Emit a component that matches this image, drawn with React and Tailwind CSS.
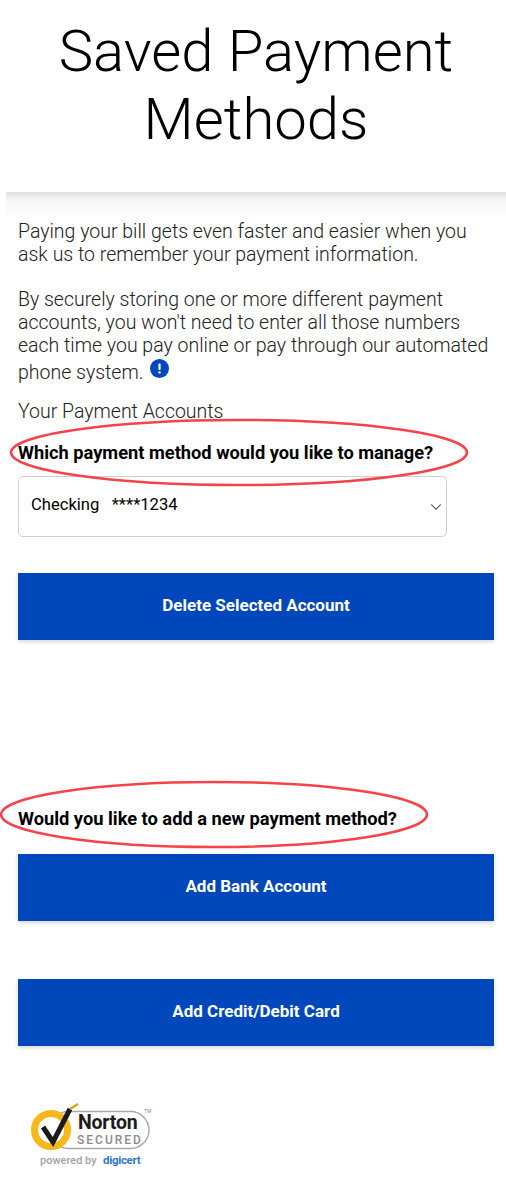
import React from 'react';
import { ChevronDown } from 'lucide-react';

const ActionButton = ({ children, className = '' }) => (
    <button className={`flex h-[67px] w-[476px] items-center justify-center bg-[#0047bb] pb-[2px] text-[17px] font-bold text-white shadow-[0_2px_4px_rgba(0,0,0,0.16)] ${className}`}>
        {children}
    </button>
);

const Circled = ({ width, height, className }) => (
    <svg width={width} height={height} viewBox={`0 0 ${width} ${height}`} className={`pointer-events-none absolute ${className}`} fill="none">
        <ellipse cx={width / 2} cy={height / 2} rx={width / 2 - 2} ry={height / 2 - 2} stroke="#f5434b" strokeWidth="2.5" />
    </svg>
);

const InfoDot = () => (
    <svg width="19" height="19" viewBox="0 0 19 19" className="relative -top-[5px] ml-[7px] inline-block align-middle">
        <circle cx="9.5" cy="9.5" r="9.5" fill="#0047bb" />
        <rect x="8.4" y="4.5" width="2.2" height="6.5" rx="0.8" fill="#fff" />
        <circle cx="9.5" cy="13.4" r="1.2" fill="#fff" />
    </svg>
);

const NortonSeal = () => (
    <svg width="140" height="80" viewBox="0 0 140 80" className="block">
        <rect x="30" y="16.5" width="99" height="37" rx="18.5" fill="#fff" stroke="#a8a8a8" strokeWidth="1.4" />
        <circle cx="31" cy="35" r="16.5" fill="#fff" stroke="#f5b91c" strokeWidth="7" />
        <path d="M23 32 L33 47 L50 14" fill="none" stroke="#1b1b1b" strokeWidth="5" />
        <path d="M50 14 L58 9" stroke="#d9a520" strokeWidth="2.5" />
        <text x="58" y="33.5" fontFamily="Roboto, sans-serif" fontWeight="700" fontSize="19.5" letterSpacing="-0.2" fill="#1c1c1c">Norton</text>
        <text x="57" y="49" fontFamily="Roboto, sans-serif" fontWeight="500" fontSize="12" letterSpacing="2" fill="#8b8b8b">SECURED</text>
        <text x="124" y="18" fontFamily="Roboto, sans-serif" fontSize="5" fill="#8b8b8b">TM</text>
        <text x="20" y="69" fontFamily="Roboto, sans-serif" fontWeight="500" fontSize="11" fill="#a3a3a3">powered by</text>
        <text x="83" y="69" fontFamily="Roboto, sans-serif" fontWeight="700" fontSize="11.5" letterSpacing="-0.3" fill="#2c78c4">digicert</text>
    </svg>
);

const App = () => {
    return (
        <div className="relative h-[1185px] w-[506px] overflow-hidden bg-white font-['Roboto',sans-serif] text-black">
            <div className="h-[192px] pt-[17px] pl-[6px] text-center text-[58px] leading-[68px] font-light">
                <h1>Saved Payment<br />Methods</h1>
            </div>
            <div className="ml-[6px] h-[26px] bg-gradient-to-b from-[#e0e0e0] via-[#f6f6f6] via-30% to-white" />

            <div className="pr-[12px] pl-[18px] text-[19.5px] leading-[23px] font-light text-[#222]">
                <p className="mt-[2px] pr-[6px]">Paying your bill gets even faster and easier when you ask us to remember your payment information.</p>
                <p className="mt-[22px]">By securely storing one or more different payment accounts, you won't need to enter all those numbers each time you pay online or pay through our automated</p>
                <p className="mt-[4px]">
                    phone system.
                    <InfoDot />
                </p>
                <p className="mt-[16px]">Your Payment Accounts</p>
            </div>

            <div className="relative">
                <h2 className="mt-[18px] px-[18px] text-[18.25px] leading-[23px] font-bold">Which payment method would you like to manage?</h2>
                <div className="mx-[18px] mt-[12px] flex h-[61px] w-[429px] items-center justify-between rounded-[5px] border border-[#cfcfcf] pr-[1px] pb-[2px] pl-[12px] text-[16.6px]">
                    <span className="whitespace-pre">Checking   ****1234</span>
                    <ChevronDown size={18} strokeWidth={1.4} className="mt-[2px] text-[#333]" />
                </div>
                <ActionButton className="mx-[18px] mt-[36px]">Delete Selected Account</ActionButton>

                <h2 className="mt-[167px] px-[18px] text-[18.25px] leading-[23px] font-bold">Would you like to add a new payment method?</h2>
                <ActionButton className="mx-[18px] mt-[24px]">Add Bank Account</ActionButton>
                <ActionButton className="mx-[18px] mt-[58px]">Add Credit/Debit Card</ActionButton>

                <div className="mt-[49px] ml-[20px]">
                    <NortonSeal />
                </div>
            </div>

            <Circled width={460} height={69} className="top-[418px] left-[9px]" />
            <Circled width={430} height={69} className="top-[780px] left-[-1px]" />
        </div>
    );
};

export default App;
